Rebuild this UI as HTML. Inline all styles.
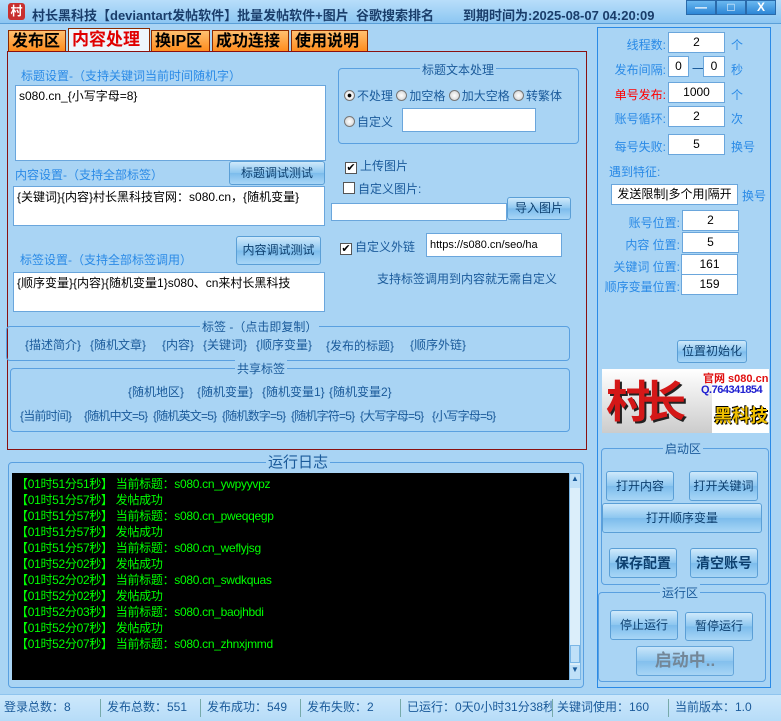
<!DOCTYPE html><html><head><meta charset="utf-8"><style>
*{box-sizing:border-box;margin:0;padding:0}
body{width:781px;height:721px;background:#a9d4f4;font-family:"Liberation Sans","Noto Sans CJK SC",sans-serif;font-size:12px;color:#1a5a9a;position:relative;overflow:hidden}
.a{position:absolute;white-space:nowrap}
.inp{position:absolute;background:#fff;border:1px solid #6aa6dc;color:#000;font-size:12px;padding:1px 3px}
.btn{position:absolute;background:linear-gradient(#cfe9fb,#8cc6f0 50%,#7cbcec 51%,#a8d6f6);border:1px solid #5b9fd6;border-radius:3px;color:#0d3f6e;text-align:center;font-size:12px}
.grp{position:absolute;border:1px solid #5aa0e0;border-radius:4px}
.leg{position:absolute;background:#a9d4f4;padding:0 2px;white-space:nowrap}
.tab{position:absolute;top:30px;height:22px;background:linear-gradient(#ffc070,#ff8a1a);border:1px solid #8a2a00;border-bottom:none;font-size:16px;color:#000;padding:0 3px;line-height:21px;font-weight:bold}
.rad{display:inline-block;width:11px;height:11px;border-radius:50%;background:radial-gradient(#fff,#ccc);border:1px solid #777;vertical-align:-1px;margin-right:2px}
.chk{display:inline-block;width:12px;height:12px;background:#fff;border:1px solid #555;vertical-align:-1px;margin-right:3px;font-size:11px;line-height:10px;color:#000;text-align:center}
.log div{height:16px;color:#00ff00;font-size:12px;letter-spacing:-0.3px}
.r{position:absolute;text-align:right;white-space:nowrap}
.num{position:absolute;background:#fff;border:1px solid #6aa6dc;color:#000;text-align:center;height:21px;line-height:19px}
.t2{font-size:12px;letter-spacing:-0.8px}
</style></head><body>
<div class="a" style="left:0;top:0;width:781px;height:24px;background:linear-gradient(#b8defa,#8cc6f2);border-bottom:1px solid #5a9fd8"></div>
<div class="a" style="left:8px;top:3px;width:17px;height:17px;background:#c83030;border-radius:3px;color:#fff;font-size:12px;text-align:center;line-height:17px;font-weight:bold">村</div>
<div class="a" style="left:32px;top:5px;font-weight:bold;color:#1a3d6a;font-size:13px">村长黑科技【deviantart发帖软件】批量发帖软件+图片&nbsp;&nbsp;谷歌搜索排名</div>
<div class="a" style="left:463px;top:5px;font-weight:bold;color:#1a3d6a;font-size:13px">到期时间为:2025-08-07 04:20:09</div>
<div class="a" style="left:686px;top:0;width:30px;height:15px;background:linear-gradient(#6ab8f0,#2d86d6);border:1px solid #2a6aaa;color:#fff;text-align:center;font-weight:bold;line-height:12px">—</div>
<div class="a" style="left:716px;top:0;width:30px;height:15px;background:linear-gradient(#6ab8f0,#2d86d6);border:1px solid #2a6aaa;color:#fff;text-align:center;font-weight:bold;line-height:12px">□</div>
<div class="a" style="left:746px;top:0;width:30px;height:15px;background:linear-gradient(#6ab8f0,#2d86d6);border:1px solid #2a6aaa;color:#fff;text-align:center;font-weight:bold;line-height:13px">X</div>

<div class="tab" style="left:8px;width:58px">发布区</div>
<div class="tab" style="left:68px;top:28px;height:24px;width:82px;background:#eef6fc;color:#e00000;font-size:17px;border-color:#8a2a00">内容处理</div>
<div class="tab" style="left:151px;width:59px">换IP区</div>
<div class="tab" style="left:212px;width:77px">成功连接</div>
<div class="tab" style="left:291px;width:77px">使用说明</div>
<div class="a" style="left:7px;top:51px;width:580px;height:399px;border:1px solid #8a1010"></div>

<div class="a" style="left:21px;top:67px;color:#2a8ae6">标题设置-（支持关键词当前时间随机字）</div>
<div class="inp" style="left:15px;top:85px;width:311px;height:76px">s080.cn_{小写字母=8}</div>
<div class="grp" style="left:338px;top:68px;width:241px;height:76px"></div>
<div class="leg" style="left:420px;top:61px">标题文本处理</div>
<div class="a" style="left:344px;top:87px;color:#1a5a9a"><span class="rad" style="background:radial-gradient(#000 25%,#fff 35%,#ccc)"></span>不处理 <span class="rad"></span>加空格 <span class="rad"></span>加大空格 <span class="rad"></span>转繁体</div>
<div class="a" style="left:344px;top:113px"><span class="rad"></span>自定义</div>
<div class="inp" style="left:402px;top:108px;width:134px;height:24px"></div>

<div class="a" style="left:15px;top:166px;color:#2a8ae6">内容设置-（支持全部标签）</div>
<div class="btn" style="left:229px;top:161px;width:96px;height:24px;line-height:22px">标题调试测试</div>
<div class="inp" style="left:13px;top:186px;width:312px;height:40px">{关键词}{内容}村长黑科技官网：s080.cn，{随机变量}</div>
<div class="a" style="left:345px;top:157px"><span class="chk">✔</span>上传图片</div>
<div class="a" style="left:343px;top:180px"><span class="chk"></span>自定义图片:</div>
<div class="inp" style="left:331px;top:203px;width:176px;height:18px"></div>
<div class="btn" style="left:507px;top:197px;width:64px;height:23px;line-height:21px">导入图片</div>

<div class="btn" style="left:236px;top:236px;width:85px;height:29px;line-height:27px">内容调试测试</div>
<div class="a" style="left:20px;top:251px;color:#2a8ae6">标签设置-（支持全部标签调用）</div>
<div class="inp" style="left:13px;top:272px;width:312px;height:40px">{顺序变量}{内容}{随机变量1}s080、cn来村长黑科技</div>
<div class="a" style="left:340px;top:238px"><span class="chk">✔</span>自定义外链</div>
<div class="inp" style="left:426px;top:233px;width:136px;height:24px;line-height:20px;font-size:11px;overflow:hidden">https://s080.cn/seo/ha</div>
<div class="a" style="left:377px;top:270px">支持标签调用到内容就无需自定义</div>

<div class="grp" style="left:6px;top:326px;width:564px;height:35px"></div>
<div class="leg" style="left:200px;top:318px">标签 -（点击即复制）</div>
<div class="a" style="left:25px;top:336px">{描述简介}</div>
<div class="a" style="left:90px;top:336px">{随机文章}</div>
<div class="a" style="left:162px;top:336px">{内容}</div>
<div class="a" style="left:203px;top:336px">{关键词}</div>
<div class="a" style="left:256px;top:336px">{顺序变量}</div>
<div class="a" style="left:326px;top:337px">{发布的标题}</div>
<div class="a" style="left:410px;top:336px">{顺序外链}</div>
<div class="grp" style="left:10px;top:368px;width:560px;height:64px"></div>
<div class="leg" style="left:235px;top:360px">共享标签</div>
<div class="a" style="left:128px;top:383px">{随机地区}</div>
<div class="a" style="left:197px;top:383px">{随机变量}</div>
<div class="a" style="left:262px;top:383px">{随机变量1}</div>
<div class="a" style="left:329px;top:383px">{随机变量2}</div>
<div class="a t2" style="left:20px;top:407px">{当前时间}</div>
<div class="a t2" style="left:84px;top:407px">{随机中文=5}</div>
<div class="a t2" style="left:153px;top:407px">{随机英文=5}</div>
<div class="a t2" style="left:222px;top:407px">{随机数字=5}</div>
<div class="a t2" style="left:291px;top:407px">{随机字符=5}</div>
<div class="a t2" style="left:360px;top:407px">{大写字母=5}</div>
<div class="a t2" style="left:432px;top:407px">{小写字母=5}</div>

<div class="grp" style="left:8px;top:462px;width:576px;height:226px"></div>
<div class="leg" style="left:266px;top:451px;font-size:15px">运行日志</div>
<div class="a" style="left:12px;top:473px;width:557px;height:207px;background:#000;padding:2px 0 0 4px">
<div class="log">
<div>【01时51分51秒】 当前标题：s080.cn_ywpyyvpz</div>
<div>【01时51分57秒】 发帖成功</div>
<div>【01时51分57秒】 当前标题：s080.cn_pweqqegp</div>
<div>【01时51分57秒】 发帖成功</div>
<div>【01时51分57秒】 当前标题：s080.cn_weflyjsg</div>
<div>【01时52分02秒】 发帖成功</div>
<div>【01时52分02秒】 当前标题：s080.cn_swdkquas</div>
<div>【01时52分02秒】 发帖成功</div>
<div>【01时52分03秒】 当前标题：s080.cn_baojhbdi</div>
<div>【01时52分07秒】 发帖成功</div>
<div>【01时52分07秒】 当前标题：s080.cn_zhnxjmmd</div>
</div></div>
<div class="a" style="left:569px;top:473px;width:12px;height:207px;background:#dbeefa;border:1px solid #7ab6e6"></div>
<div class="a" style="left:570px;top:474px;width:10px;height:14px;background:#bfe0f8;color:#1a5a9a;font-size:8px;text-align:center">▲</div>
<div class="a" style="left:570px;top:645px;width:10px;height:18px;background:#bfe0f8;border:1px solid #7ab6e6"></div>
<div class="a" style="left:570px;top:665px;width:10px;height:14px;background:#bfe0f8;color:#1a5a9a;font-size:8px;text-align:center">▼</div>

<div class="a" style="left:0;top:694px;width:781px;height:27px;background:linear-gradient(#cde8fb,#b6dcf8);border-top:1px solid #8fc4ee;color:#1a5a9a;font-size:12px;line-height:24px">
<span class="a" style="left:4px">登录总数：8</span><span class="a" style="left:100px;top:4px;height:18px;border-left:1px solid #7aa"></span>
<span class="a" style="left:107px">发布总数：551</span><span class="a" style="left:200px;top:4px;height:18px;border-left:1px solid #7aa"></span>
<span class="a" style="left:207px">发布成功：549</span><span class="a" style="left:300px;top:4px;height:18px;border-left:1px solid #7aa"></span>
<span class="a" style="left:307px">发布失败：2</span><span class="a" style="left:400px;top:4px;height:18px;border-left:1px solid #7aa"></span>
<span class="a" style="left:407px;width:145px;overflow:hidden">已运行：0天0小时31分38秒</span><span class="a" style="left:552px;top:4px;height:18px;border-left:1px solid #7aa"></span>
<span class="a" style="left:557px">关键词使用：160</span><span class="a" style="left:668px;top:4px;height:18px;border-left:1px solid #7aa"></span>
<span class="a" style="left:675px">当前版本：1.0</span></div>

<div class="a" style="left:597px;top:27px;width:174px;height:661px;border:1px solid #2a8ae6"></div>
<div class="r" style="left:598px;width:68px;top:36px;color:#2a8ae6">线程数:</div><div class="num" style="left:668px;top:32px;width:57px">2</div><div class="a" style="left:731px;top:36px;color:#2a8ae6">个</div>
<div class="r" style="left:598px;width:68px;top:61px;color:#2a8ae6">发布间隔:</div><div class="num" style="left:668px;top:56px;width:21px">0</div><div class="a" style="left:692px;top:60px;color:#1a5a9a">一</div><div class="num" style="left:703px;top:56px;width:22px">0</div><div class="a" style="left:731px;top:61px;color:#2a8ae6">秒</div>
<div class="r" style="left:598px;width:68px;top:86px;color:#f00">单号发布:</div><div class="num" style="left:668px;top:82px;width:57px">1000</div><div class="a" style="left:731px;top:86px;color:#2a8ae6">个</div>
<div class="r" style="left:598px;width:68px;top:110px;color:#2a8ae6">账号循环:</div><div class="num" style="left:668px;top:106px;width:57px">2</div><div class="a" style="left:731px;top:110px;color:#2a8ae6">次</div>
<div class="r" style="left:598px;width:68px;top:138px;color:#2a8ae6">每号失败:</div><div class="num" style="left:668px;top:134px;width:57px">5</div><div class="a" style="left:731px;top:138px;color:#2a8ae6">换号</div>
<div class="a" style="left:609px;top:163px;color:#2a8ae6">遇到特征:</div>
<div class="num" style="left:611px;top:184px;width:127px;color:#000">发送限制|多个用|隔开</div><div class="a" style="left:742px;top:187px;color:#2a8ae6">换号</div>
<div class="r" style="left:600px;width:80px;top:214px;color:#2a8ae6">账号位置:</div><div class="num" style="left:682px;top:210px;width:57px">2</div>
<div class="r" style="left:600px;width:80px;top:236px;color:#2a8ae6">内容 位置:</div><div class="num" style="left:682px;top:232px;width:57px">5</div>
<div class="r" style="left:598px;width:82px;top:258px;color:#2a8ae6">关键词 位置:</div><div class="num" style="left:681px;top:254px;width:57px">161</div>
<div class="r" style="left:596px;width:84px;top:278px;color:#2a8ae6">顺序变量位置:</div><div class="num" style="left:681px;top:274px;width:57px">159</div>
<div class="btn" style="left:677px;top:340px;width:70px;height:23px;line-height:21px">位置初始化</div>
<div class="a" style="left:602px;top:369px;width:167px;height:64px;background:#fff;overflow:hidden">
<div class="a" style="left:0;top:0;width:110px;height:64px;background:linear-gradient(#fff,#ccc)"></div>
<div class="a" style="left:4px;top:2px;font-size:44px;line-height:54px;font-weight:bold;color:#d41818;letter-spacing:-8px;text-shadow:2px 2px 0 #222;font-family:'Noto Sans CJK SC',sans-serif">村长</div>
<div class="a" style="left:101px;top:1px;font-size:11px;font-weight:bold;color:#e01010">官网 s080.cn</div>
<div class="a" style="left:99px;top:15px;font-size:11px;font-weight:bold;color:#2020d0;letter-spacing:-0.5px">Q.764341854</div>
<div class="a" style="left:112px;top:33px;font-size:18px;font-weight:bold;color:#f0c000;text-shadow:1px 1px 0 #000,-1px -1px 0 #000">黑科技</div></div>
<div class="grp" style="left:601px;top:448px;width:168px;height:137px"></div>
<div class="leg" style="left:663px;top:440px">启动区</div>
<div class="btn" style="left:606px;top:471px;width:68px;height:30px;line-height:28px">打开内容</div>
<div class="btn" style="left:689px;top:471px;width:69px;height:30px;line-height:28px">打开关键词</div>
<div class="btn" style="left:602px;top:503px;width:160px;height:30px;line-height:28px">打开顺序变量</div>
<div class="btn" style="left:609px;top:548px;width:68px;height:30px;line-height:28px;font-weight:bold;font-size:14px">保存配置</div>
<div class="btn" style="left:690px;top:548px;width:68px;height:30px;line-height:28px;font-weight:bold;font-size:14px">清空账号</div>
<div class="grp" style="left:598px;top:592px;width:168px;height:90px"></div>
<div class="leg" style="left:660px;top:584px">运行区</div>
<div class="btn" style="left:610px;top:610px;width:68px;height:30px;line-height:28px">停止运行</div>
<div class="btn" style="left:685px;top:612px;width:68px;height:29px;line-height:27px">暂停运行</div>
<div class="btn" style="left:636px;top:646px;width:98px;height:30px;line-height:28px;font-weight:bold;font-size:17px;color:#6a7a88;opacity:.85">启动中..</div>
</body></html>
